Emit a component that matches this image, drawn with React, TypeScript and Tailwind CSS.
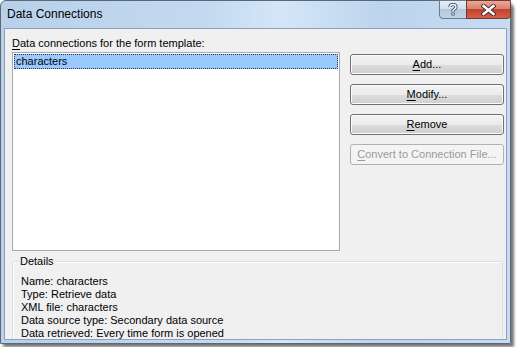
import React from 'react'

const font = { fontFamily: '"Liberation Sans", Arial, sans-serif' }

function Btn({ u, rest, disabled }: { u: string; rest: string; disabled?: boolean }) {
  return (
    <button
      className={
        disabled
          ? 'h-[21px] w-full rounded-[3px] border border-[#adb2b5] bg-[#f4f4f4] text-[11px] text-[#9a9a9a]'
          : 'h-[21px] w-full rounded-[3px] border border-[#707070] bg-[linear-gradient(#f2f2f2_0%,#ebebeb_50%,#dddddd_51%,#cfcfcf_100%)] text-[11px] text-black shadow-[inset_0_0_0_1px_#fcfcfc]'
      }
    >
      <span className="underline underline-offset-2">{u}</span>
      {rest}
    </button>
  )
}

export default function App() {
  return (
    <div className="w-[516px] h-[347px] bg-white overflow-hidden" style={font}>
      <div className="relative w-[511px] h-[344px] rounded-t-[6px] border border-[#5d6874] bg-[linear-gradient(90deg,#b8d0ea_0%,#c3d9f1_40%,#d4e6f8_55%,#bcd4ee_75%,#c6dcf3_100%)] shadow-[3px_3px_3px_rgba(0,0,0,0.55)] flex flex-col px-[3px] pb-[3px]">
        {/* title bar */}
        <div className="h-[27px] flex items-center pl-[3px] pb-[2px] text-[12px] text-black">
          Data Connections
        </div>
        <div className="absolute top-[-1px] right-[43px] w-[28px] h-[19px] rounded-bl-[4px] border border-[#6a7c91] bg-[linear-gradient(#e4edf7_0%,#d2dfee_45%,#b4c6da_50%,#c2d3e6_100%)] flex items-center justify-center">
          <svg width="10" height="13" viewBox="0 0 10 13">
            <path d="M2 4 Q2 1.5 5 1.5 Q8 1.5 8 4 Q8 5.5 6 6.5 L5 7.5 L5 8.5" fill="none" stroke="#3b4a5c" strokeWidth="3.2" />
            <path d="M2 4 Q2 1.5 5 1.5 Q8 1.5 8 4 Q8 5.5 6 6.5 L5 7.5 L5 8.5" fill="none" stroke="#fff" strokeWidth="1.4" />
            <rect x="3.4" y="9.6" width="3.2" height="2.8" fill="#3b4a5c" />
            <rect x="4.2" y="10.3" width="1.6" height="1.4" fill="#fff" />
          </svg>
        </div>
        <div className="absolute top-[-1px] right-[-1px] w-[45px] h-[19px] rounded-br-[4px] border border-[#6e3a32] bg-[linear-gradient(#e9a899_0%,#d9826f_45%,#c3402b_50%,#d4604a_100%)] flex items-center justify-center">
          <svg width="15" height="12" viewBox="0 0 15 12">
            <path d="M2.5 2 L12.5 10 M12.5 2 L2.5 10" stroke="#3d2a28" strokeWidth="4.2" strokeLinecap="square" />
            <path d="M2.5 2 L12.5 10 M12.5 2 L2.5 10" stroke="#fff" strokeWidth="2.4" strokeLinecap="square" />
          </svg>
        </div>

        {/* client area */}
        <div className="flex-1 overflow-hidden border border-[#8da2ba] bg-[#f0f0f0] pl-[7px] pr-[2px] pt-[7px]">
          <div className="text-[11px] leading-[14px] text-black">
            <span className="underline underline-offset-2">D</span>ata connections for the form template:
          </div>
          <div className="mt-[2px] flex gap-[10px]">
            <div className="w-[330px] h-[199px] border border-[#a9a9b4] bg-white p-px">
              <div className="h-[15px] bg-[#99c9ff] border border-dotted border-[#333] text-[11px] leading-[13px] pl-[1px] text-black">
                characters
              </div>
            </div>
            <div className="w-[155px] flex flex-col gap-[9px] pt-[2px]">
              <Btn u="A" rest="dd..." />
              <Btn u="M" rest="odify..." />
              <Btn u="R" rest="emove" />
              <Btn u="C" rest="onvert to Connection File..." disabled />
            </div>
          </div>

          <div className="relative mt-[10px] mr-[1px] h-[100px] rounded-[3px] border border-[#d5dfe5] shadow-[inset_1px_1px_0_#fff]">
            <div className="absolute -top-[8px] left-[5px] bg-[#f0f0f0] px-[2px] text-[11px] leading-[14px] text-black">
              Details
            </div>
            <div className="pl-[8px] pt-[13px] text-[11px] leading-[13px] text-black">
              <div>Name: characters</div>
              <div>Type: Retrieve data</div>
              <div>XML file: characters</div>
              <div>Data source type: Secondary data source</div>
              <div>Data retrieved: Every time form is opened</div>
            </div>
          </div>
        </div>
      </div>
    </div>
  )
}
